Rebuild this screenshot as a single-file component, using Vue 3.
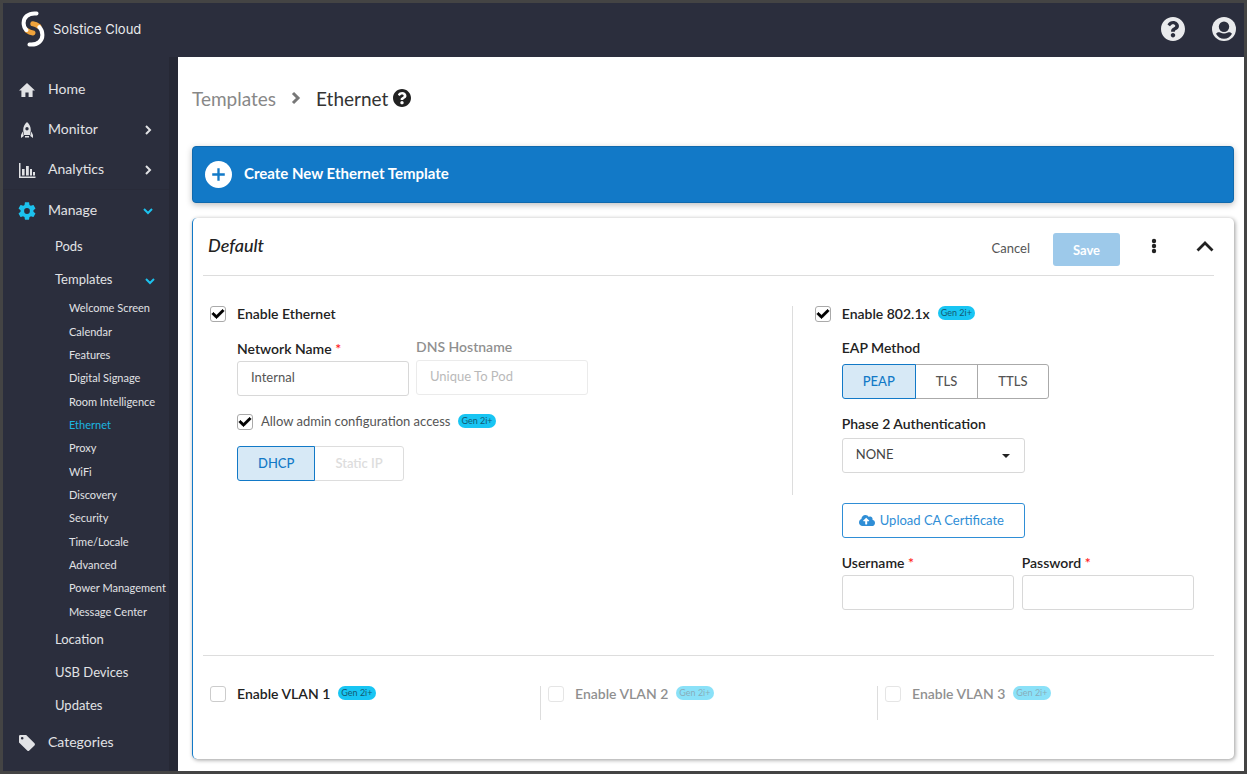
<script setup>
import { ref } from 'vue'

const submenu = ['Welcome Screen', 'Calendar', 'Features', 'Digital Signage', 'Room Intelligence', 'Ethernet', 'Proxy', 'WiFi', 'Discovery', 'Security', 'Time/Locale', 'Advanced', 'Power Management', 'Message Center']
const active = 'Ethernet'

const enableEthernet = ref(true)
const allowAdmin = ref(true)
const enable8021x = ref(true)
const networkName = ref('Internal')
const username = ref('')
const password = ref('')
const phase2 = ref('NONE')
const eapMethod = ref('PEAP')
const eapMethods = ['PEAP', 'TLS', 'TTLS']
const vlans = ref([
  { id: 1, on: false, disabled: false },
  { id: 2, on: false, disabled: true },
  { id: 3, on: false, disabled: true }
])

const questionPath = 'M504 256c0 136.997-111.043 248-248 248S8 392.997 8 256C8 119.083 119.043 8 256 8s248 111.083 248 248zM262.655 90c-54.497 0-89.255 22.957-116.549 63.758-3.536 5.286-2.353 12.415 2.715 16.258l34.699 26.31c5.205 3.947 12.621 3.008 16.665-2.122 17.864-22.658 30.113-35.797 57.303-35.797 20.429 0 45.698 13.148 45.698 32.958 0 14.976-12.363 22.667-32.534 33.976C247.128 238.528 216 254.941 216 296v4c0 6.627 5.373 12 12 12h56c6.627 0 12-5.373 12-12v-1.333c0-28.462 83.186-29.647 83.186-106.667 0-58.002-60.165-102-116.531-102zM256 338c-25.365 0-46 20.635-46 46 0 25.364 20.635 46 46 46s46-20.636 46-46c0-25.365-20.635-46-46-46z'
const checkPath = 'M173.898 439.404l-166.4-166.4c-9.997-9.997-9.997-26.206 0-36.204l36.203-36.204c9.997-9.998 26.207-9.998 36.204 0L192 312.69 432.095 72.596c9.997-9.997 26.207-9.997 36.204 0l36.203 36.204c9.997 9.997 9.997 26.206 0 36.204l-294.4 294.401c-9.998 9.997-26.207 9.997-36.204-.001z'
</script>

<template>
  <div class="app">
    <header class="topbar">
      <a class="brand" href="#">
        <svg class="logo" viewBox="0 0 24 36" fill="none" stroke-linecap="round" stroke-width="4">
          <path d="M6 19.500C8 21 10 21.700 12 22" stroke="#efa33c" stroke-width="5" />
          <path d="M18 15.500C16 13.800 14 12.900 11.800 12.700" stroke="#efa33c" stroke-width="5" />
          <path d="M15.500 2.500C7 1.600 2.600 6.500 2.600 12c0 3 .9 5.200 2.800 7" stroke="#fff" />
          <path d="M8.500 33.500C17 34.400 21.400 29.500 21.400 24c0-3-1-5.800-3-7.800" stroke="#fff" />
        </svg>
        <span>Solstice Cloud</span>
      </a>
      <div class="top-actions">
        <button type="button" class="icon-btn" aria-label="Help">
          <svg class="i24" viewBox="8 8 496 496" fill="currentColor"><path :d="questionPath" /></svg>
        </button>
        <button type="button" class="icon-btn" aria-label="Account">
          <svg class="i24" viewBox="0 0 24 24">
            <circle cx="12" cy="12" r="12" fill="currentColor" />
            <circle cx="12" cy="9.700" r="5.200" fill="#2b2e3d" />
            <path d="M4 16.800c1-1.600 2.500-2 4.200-1.300 2.400 1.200 5.200 1.200 7.600 0 1.700-.7 3.200-.3 4.200 1.300-1.600 3.100-4.600 5-8 5s-6.400-1.900-8-5z" fill="#2b2e3d" />
          </svg>
        </button>
      </div>
    </header>

    <div class="shell">
      <nav class="sidebar">
        <a class="row" href="#">
          <svg class="nav-icon" viewBox="0 0 18 18" fill="currentColor"><path d="M9 2L1 9.600h2.400V16h4v-4.400h3.200V16h4V9.600H17z" /></svg>
          <span>Home</span>
        </a>
        <a class="row" href="#">
          <svg class="nav-icon" viewBox="0 0 18 18" fill="currentColor">
            <path fill-rule="evenodd" d="M9 1C6.400 3 5.200 6 5.200 9.200L6 14h6l.8-4.800C12.800 6 11.600 3 9 1zm0 5a1.700 1.700 0 1 1 0 3.400A1.700 1.700 0 0 1 9 6z" />
            <path d="M4.700 10.500L3 14v3l2.800-2zM13.300 10.500L15 14v3l-2.800-2zM7 15h4v1.500H7z" />
          </svg>
          <span>Monitor</span>
          <svg class="chev" viewBox="0 0 10 10"><path d="M3 1l4 4-4 4" /></svg>
        </a>
        <a class="row" href="#">
          <svg class="nav-icon" viewBox="0 0 18 18" fill="currentColor"><path d="M1 2h1.500v13.500H17.500V17H1zM4 8h2.600v6.500H4zM8 5h2.800v9.500H8zM12 8h2v6.500h-2zM15 11h2v3.500h-2z" /></svg>
          <span>Analytics</span>
          <svg class="chev" viewBox="0 0 10 10"><path d="M3 1l4 4-4 4" /></svg>
        </a>
        <a class="row manage" href="#">
          <svg class="nav-icon cyan" viewBox="2 2 20 20" fill="currentColor"><path d="M19.140 12.940c.04-.3.06-.61.06-.94 0-.32-.02-.64-.07-.94l2.030-1.580c.18-.14.23-.41.12-.61l-1.920-3.320c-.12-.22-.37-.29-.59-.22l-2.390.96c-.5-.38-1.030-.7-1.620-.94l-.36-2.540c-.04-.24-.24-.41-.48-.41h-3.840c-.24 0-.43.17-.47.41l-.36 2.540c-.59.24-1.130.57-1.620.94l-2.390-.96c-.22-.08-.47 0-.59.22L2.740 8.870c-.12.21-.08.47.12.61l2.030 1.580c-.05.3-.09.63-.09.94s.02.64.07.94l-2.030 1.580c-.18.14-.23.41-.12.61l1.920 3.320c.12.22.37.29.59.22l2.390-.96c.5.38 1.030.7 1.620.94l.36 2.540c.05.24.24.41.48.41h3.840c.24 0 .44-.17.47-.41l.36-2.540c.59-.24 1.130-.56 1.620-.94l2.390.96c.22.08.47 0 .59-.22l1.920-3.320c.12-.22.07-.47-.12-.61l-2.010-1.580zM12 15.200a3.200 3.200 0 1 1 0-6.400 3.200 3.200 0 0 1 0 6.400z" /></svg>
          <span>Manage</span>
          <svg class="chev cyan" viewBox="0 0 10 10"><path d="M1 3l4 4 4-4" /></svg>
        </a>
        <a class="row sub" href="#"><span>Pods</span></a>
        <a class="row sub" href="#">
          <span>Templates</span>
          <svg class="chev cyan" viewBox="0 0 10 10"><path d="M1 3l4 4 4-4" /></svg>
        </a>
        <ul class="leaf-list">
          <li v-for="item in submenu" :key="item"><a href="#" :class="{ current: item === active }">{{ item }}</a></li>
        </ul>
        <a class="row sub" href="#"><span>Location</span></a>
        <a class="row sub" href="#"><span>USB Devices</span></a>
        <a class="row sub" href="#"><span>Updates</span></a>
        <a class="row" href="#">
          <svg class="nav-icon" viewBox="0 0 18 18" fill="currentColor"><path fill-rule="evenodd" d="M2.200 1h6l8.300 8.300a1.500 1.500 0 0 1 0 2.100l-5.200 5.200a1.500 1.500 0 0 1-2.100 0L1 8.400V2.200A1.200 1.200 0 0 1 2.200 1zm2 2a1.300 1.300 0 1 0 0 2.600 1.300 1.300 0 0 0 0-2.600z" /></svg>
          <span>Categories</span>
        </a>
      </nav>

      <main class="main">
        <div class="crumbs">
          <a href="#">Templates</a>
          <svg class="crumb-sep" viewBox="0 0 10 14"><path d="M2 2l5 5-5 5" /></svg>
          <h1>Ethernet</h1>
          <svg class="crumb-help" viewBox="8 8 496 496" fill="currentColor"><path :d="questionPath" /></svg>
        </div>

        <button type="button" class="create">
          <svg viewBox="0 0 28 28"><circle cx="14" cy="14" r="14" fill="#fff" /><path d="M14 7.500v13M7.500 14h13" stroke="#1279c7" stroke-width="2.400" /></svg>
          <span>Create New Ethernet Template</span>
        </button>

        <section class="card">
          <div class="card-head">
            <h2>Default</h2>
            <button type="button" class="cancel">Cancel</button>
            <button type="button" class="save">Save</button>
            <button type="button" class="icon-btn dark more" aria-label="More">
              <svg viewBox="0 0 6 16" fill="currentColor"><circle cx="3" cy="3" r="2.200" /><circle cx="3" cy="8" r="2.200" /><circle cx="3" cy="13" r="2.200" /></svg>
            </button>
            <button type="button" class="icon-btn dark collapse" aria-label="Collapse">
              <svg viewBox="0 0 18 12"><path d="M1.500 10.500L9 3l7.500 7.500" fill="none" stroke="currentColor" stroke-width="2.800" /></svg>
            </button>
          </div>

          <div class="columns">
            <div class="col left">
              <label class="check-row strong">
                <span class="box"><input v-model="enableEthernet" type="checkbox"><svg v-if="enableEthernet" viewBox="0 0 512 512"><path :d="checkPath" /></svg></span>
                <span class="text">Enable Ethernet</span>
              </label>
              <div class="indent">
                <div class="fields">
                  <div class="field">
                    <label class="label req" for="net">Network Name <em>*</em></label>
                    <input id="net" v-model="networkName" type="text">
                  </div>
                  <div class="field off">
                    <label class="label" for="dns">DNS Hostname</label>
                    <input id="dns" type="text" placeholder="Unique To Pod" disabled>
                  </div>
                </div>
                <label class="check-row admin">
                  <span class="box"><input v-model="allowAdmin" type="checkbox"><svg v-if="allowAdmin" viewBox="0 0 512 512"><path :d="checkPath" /></svg></span>
                  <span class="text">Allow admin configuration access</span>
                  <span class="badge">Gen 2i+</span>
                </label>
                <div class="group">
                  <button type="button" class="on">DHCP</button>
                  <button type="button" disabled>Static IP</button>
                </div>
              </div>
            </div>

            <div class="col">
              <label class="check-row strong">
                <span class="box"><input v-model="enable8021x" type="checkbox"><svg v-if="enable8021x" viewBox="0 0 512 512"><path :d="checkPath" /></svg></span>
                <span class="text">Enable 802.1x</span>
                <span class="badge">Gen 2i+</span>
              </label>
              <div class="indent">
                <div class="label eap">EAP Method</div>
                <div class="group">
                  <button v-for="m in eapMethods" :key="m" type="button" :class="{ on: m === eapMethod }" @click="eapMethod = m">{{ m }}</button>
                </div>
                <label class="label phase" for="phase">Phase 2 Authentication</label>
                <div class="select">
                  <select id="phase" v-model="phase2"><option>NONE</option></select>
                  <svg viewBox="0 0 10 6"><path d="M1 1h8L5 5z" fill="#222" /></svg>
                </div>
                <button type="button" class="upload">
                  <svg viewBox="0 0 640 512" fill="currentColor"><path d="M537.600 226.600c4.100-10.700 6.400-22.400 6.400-34.600 0-53-43-96-96-96-19.700 0-38.100 6-53.300 16.200C367 64.200 315.300 32 256 32c-88.400 0-160 71.600-160 160 0 2.700.1 5.400.2 8.100C40.200 219.800 0 273.200 0 336c0 79.500 64.500 144 144 144h368c70.700 0 128-57.300 128-128 0-61.900-44-113.600-102.400-125.400zM393.400 288H328v112c0 8.800-7.200 16-16 16h-48c-8.800 0-16-7.200-16-16V288h-65.400c-14.300 0-21.400-17.200-11.300-27.300l105.400-105.400c6.200-6.200 16.400-6.200 22.600 0l105.400 105.400c10.100 10.100 2.900 27.300-11.300 27.300z" /></svg>
                  <span class="text">Upload CA Certificate</span>
                </button>
                <div class="fields">
                  <div class="field">
                    <label class="label req" for="user">Username <em>*</em></label>
                    <input id="user" v-model="username" type="text">
                  </div>
                  <div class="field">
                    <label class="label req" for="pass">Password <em>*</em></label>
                    <input id="pass" v-model="password" type="password">
                  </div>
                </div>
              </div>
            </div>
          </div>

          <div class="vlans">
            <div v-for="v in vlans" :key="v.id" class="vlan">
              <label class="check-row strong" :class="{ off: v.disabled }">
                <span class="box"><input v-model="v.on" type="checkbox" :disabled="v.disabled"><svg v-if="v.on" viewBox="0 0 512 512"><path :d="checkPath" /></svg></span>
                <span class="text">Enable VLAN {{ v.id }}</span>
                <span class="badge">Gen 2i+</span>
              </label>
            </div>
          </div>
        </section>
      </main>
    </div>
  </div>
</template>

<style>
body { margin: 0; }
</style>

<style scoped>
.app, .app * { box-sizing: border-box; }
.app {
  display: flex;
  flex-direction: column;
  min-height: 100vh;
  border: 3px solid #444;
  background: #fff;
  color: #222;
  font-family: Lato, "Liberation Sans", sans-serif;
  font-size: 14px;
}
a { color: inherit; text-decoration: none; }
button { font: inherit; color: inherit; padding: 0; border: 0; background: none; cursor: pointer; }
svg { display: block; flex: none; }
h1, h2 { margin: 0; font-weight: 400; }

.topbar {
  display: flex;
  align-items: center;
  justify-content: space-between;
  height: 54px;
  padding: 0 8px 2px 18px;
  background: #2b2e3d;
  color: #e9eaec;
}
.brand { display: flex; align-items: center; gap: 8px; font-family: Inter, sans-serif; font-size: 13px; }
.logo { width: 24px; height: 36px; }
.top-actions { display: flex; gap: 27px; }
.i24 { width: 24px; height: 24px; }

.shell { display: flex; flex: 1; }
.sidebar {
  display: flex;
  flex-direction: column;
  flex: none;
  width: 175px;
  padding: 12px 0 9px;
  border-right: 9px solid #262835;
  background: #2b2e3d;
  color: #e1e2e5;
}
.row { display: flex; align-items: center; height: 40px; padding: 2px 16px 0 15px; white-space: nowrap; }
.row span { padding-bottom: 4px; }
.nav-icon { width: 18px; height: 18px; margin-right: 12px; }
.row .chev { margin-left: auto; }
.chev { width: 10px; height: 10px; fill: none; stroke: currentColor; stroke-width: 2; }
.cyan { color: #1cc2ee; }
.manage { height: 41px; border-top: 1px solid #292b39; }
.sub { height: 33px; padding: 2px 14px 0 52px; font-size: 13px; }
.leaf-list {
  display: grid;
  grid-auto-rows: 1fr;
  flex: 1;
  min-height: 322px;
  margin: 0;
  padding: 0 0 0 66px;
  list-style: none;
  font-size: 11px;
  white-space: nowrap;
}
.leaf-list li { display: flex; align-items: center; }
.current { color: #1cb5e0; }

.main { flex: 1; min-width: 0; padding: 28px 10px 12px 14px; }
.crumbs { display: flex; align-items: center; height: 26px; margin-bottom: 35px; font-size: 19px; color: #888; }
.crumbs h1 { font-size: 19px; color: #333; }
.crumb-sep { width: 10px; height: 14px; margin: 0 15px; fill: none; stroke: #777; stroke-width: 3; }
.crumb-help { width: 18px; height: 18px; margin-left: 5px; color: #222; }

.create {
  display: flex;
  align-items: center;
  gap: 12px;
  width: 100%;
  height: 57px;
  padding: 0 12px;
  border: 1px solid #0f69ad;
  border-radius: 4px;
  background: #1279c7;
  box-shadow: 0 2px 6px rgba(0, 0, 0, .25);
  color: #fff;
  font-size: 15px;
  font-weight: 700;
}
.create svg { width: 27px; height: 27px; }
.create span { padding-bottom: 3px; }

.card {
  margin-top: 15px;
  padding: 0 20px 39px 10px;
  border-left: 1px solid #1279c7;
  border-radius: 5px;
  box-shadow: 1px 1px 4px rgba(0, 0, 0, .4);
}
.card-head { display: flex; align-items: center; height: 58px; padding: 6px 0 0 5px; border-bottom: 1px solid #ddd; }
.card-head h2 { flex: 1; padding-bottom: 9px; font-size: 18px; font-style: italic; font-weight: 500; }
.cancel { margin-right: 23px; padding-bottom: 3px; color: #555; font-size: 13px; }
.save { width: 67px; height: 33px; border-radius: 3px; background: #9dc9ea; color: #fff; font-size: 13px; font-weight: 700; }
.dark { padding-bottom: 8px; color: #222; }
.more { margin-left: 31px; }
.more svg { width: 6px; height: 16px; }
.collapse { margin-left: 39px; }
.collapse svg { width: 18px; height: 12px; }

.columns { display: grid; grid-template-columns: 7fr 5fr; padding: 30px 0 45px; }
.left { align-self: start; padding-bottom: 14px; border-right: 1px solid #ddd; }
.col + .col { padding-left: 22px; }
.check-row { display: flex; align-items: center; height: 16px; white-space: nowrap; }
.left > .check-row { padding-left: 7px; }
.text { padding-bottom: 2px; }
.strong { font-weight: 600; }
.strong .box { margin-right: 11px; }
.box { display: grid; flex: none; width: 16px; height: 16px; }
.box > * { grid-area: 1 / 1; }
.box input { appearance: none; width: 16px; height: 16px; margin: 0; border: 1px solid #ccc; border-radius: 3px; background: #fff; }
.box input:checked { border-color: #aaa; }
.box svg { place-self: center; width: 12px; height: 12px; overflow: visible; stroke: #000; stroke-width: 30; pointer-events: none; }
.badge {
  height: 14px;
  margin-bottom: 2px;
  margin-left: 8px;
  padding: 0 3px;
  border-radius: 7px;
  background: #18c5f3;
  color: #135a72;
  font-size: 9px;
  font-weight: 400;
  line-height: 14px;
}
.indent { padding-left: 27px; }
.left .indent { padding-left: 34px; }
.fields { display: flex; gap: 8px; }
.left .fields { gap: 7px; margin-top: 17px; }
.field { width: 172px; }
.label { display: block; height: 21px; font-weight: 600; line-height: 16px; }
.label.req { height: 22px; line-height: 20px; }
.label em { color: #f22; font-style: normal; }
.field input {
  display: block;
  width: 100%;
  height: 35px;
  padding: 0 13px 3px;
  border: 1px solid #d8d8d8;
  border-radius: 3px;
  background: #fff;
  color: #555;
  font: inherit;
  font-size: 13px;
}
.off { opacity: .5; }
.admin { margin: 18px 0 16px; color: #555; font-size: 13px; }
.admin .box { margin-right: 8px; }
.group { display: flex; }
.group button {
  height: 35px;
  margin-left: -1px;
  padding: 0 20px 2px;
  border: 1px solid #aaa;
  color: #555;
  font-size: 13px;
  font-weight: 500;
}
.group button:first-child { margin-left: 0; border-radius: 3px 0 0 3px; }
.group button:last-child { border-radius: 0 3px 3px 0; }
.group .on { position: relative; border-color: #1279c7; background: #d7e9f6; color: #1279c7; }
.group button:disabled { border-color: #ddd; color: #ddd; font-weight: 600; }
.eap { height: 24px; margin-top: 18px; }
.phase { height: 22px; margin-top: 17px; }
.select { display: grid; align-items: center; width: 183px; }
.select > * { grid-area: 1 / 1; }
.select select {
  appearance: none;
  width: 100%;
  height: 35px;
  padding: 0 13px 3px;
  border: 1px solid #d8d8d8;
  border-radius: 3px;
  background: #fff;
  color: #444;
  font: inherit;
  font-size: 13px;
}
.select svg { width: 10px; height: 6px; margin-right: 14px; justify-self: end; pointer-events: none; }
.upload {
  display: flex;
  align-items: center;
  gap: 5px;
  width: 183px;
  height: 35px;
  margin: 30px 0 15px;
  padding: 0 16px;
  border: 1px solid #2f8ed6;
  border-radius: 3px;
  color: #2f8ed6;
  font-size: 13px;
  white-space: nowrap;
}
.upload svg { width: 16px; height: 13px; }

.vlans { display: grid; grid-template-columns: repeat(3, 1fr); padding-top: 30px; border-top: 1px solid #ddd; }
.vlan { height: 34px; padding-left: 7px; }
.vlan + .vlan { border-left: 1px solid #ddd; }
</style>
